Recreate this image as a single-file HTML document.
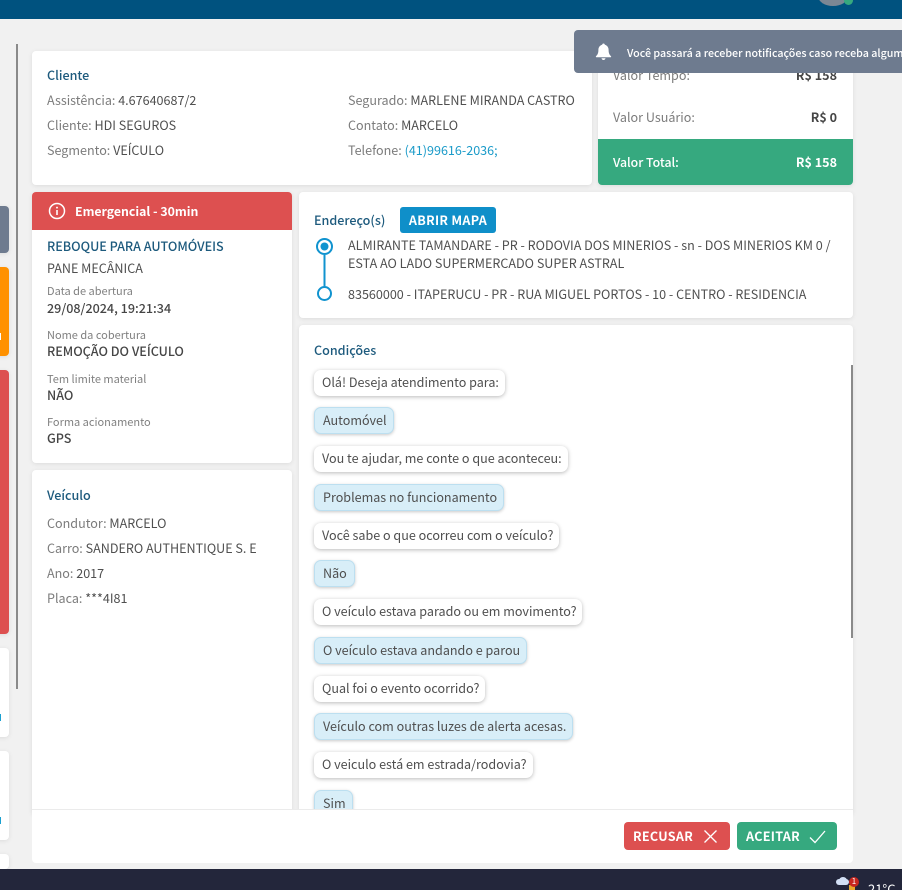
<!DOCTYPE html>
<html lang="pt-BR"><head><meta charset="utf-8"><title>Assistência</title>
<style>
*{box-sizing:border-box}
html,body{margin:0;padding:0;width:902px;height:890px;overflow:hidden;background:#f1f1f1}
body{position:relative;font-family:"Noto Sans CJK JP","Liberation Sans",sans-serif;font-size:12.57px;color:#4f4f4f}
.a{position:absolute}
.t{position:absolute;white-space:nowrap;line-height:20px;height:20px}
.card{position:absolute;background:#fff;border-radius:4px;box-shadow:0 1px 5px rgba(0,0,0,.09)}
.h{color:#1d5a7d;font-weight:500}
.g{color:#7c7c7c}
.d{color:#4f4f4f}
.s{font-size:11px;color:#808080}
.b{font-weight:500;color:#454545}
.bub{position:absolute;left:314px;height:26px;line-height:23px;padding:0 8px;border-radius:7px;background:#fff;box-shadow:0 1px 4px rgba(0,0,0,.28);white-space:nowrap;color:#4f4f4f}
.u{background:#d8eef8;border:1px solid #bcdff0;line-height:23px;height:27px;box-shadow:0 1px 3px rgba(0,0,0,.22)}
</style></head><body>
<div class="a" style="left:0;top:0;width:902px;height:19px;background:#00527f"></div>
<div class="a" style="left:818px;top:-14px;width:30px;height:20px;border-radius:50%;background:#7b8794"></div>
<div class="a" style="left:844px;top:-4px;width:9px;height:9px;border-radius:50%;background:#36a97f"></div>

<div class="a" style="left:16px;top:44px;width:2px;height:645px;background:#8a8a8a"></div>
<div class="card" style="left:-6px;top:206px;width:15px;height:47px;background:#6e7b8f"></div>
<div class="card" style="left:-6px;top:267px;width:15px;height:89px;background:#ff9100"></div>
<div class="card" style="left:-6px;top:370px;width:15px;height:264px;background:#dd5050"></div>
<div class="card" style="left:-6px;top:648px;width:15px;height:89px"></div>
<div class="card" style="left:-6px;top:751px;width:15px;height:89px"></div>
<div class="card" style="left:-6px;top:854px;width:15px;height:15px"></div>
<div class="a" style="left:0;top:714px;width:1px;height:7px;background:#1aa0d0"></div>
<div class="a" style="left:0;top:817px;width:1px;height:7px;background:#1aa0d0"></div>
<div class="a" style="left:0;top:333px;width:1px;height:7px;background:#fff"></div>

<!-- Cliente -->
<div class="card" style="left:32px;top:51px;width:560px;height:134px"></div>
<div class="t h" style="left:47px;top:65px">Cliente</div>
<div class="t g" style="left:47px;top:90px">Assistência: <span class="d">4.67640687/2</span></div>
<div class="t g" style="left:47px;top:115px">Cliente: <span class="d">HDI SEGUROS</span></div>
<div class="t g" style="left:47px;top:140px">Segmento: <span class="d">VEÍCULO</span></div>
<div class="t g" style="left:348px;top:90px">Segurado: <span class="d">MARLENE MIRANDA CASTRO</span></div>
<div class="t g" style="left:348px;top:115px">Contato: <span class="d">MARCELO</span></div>
<div class="t g" style="left:348px;top:140px">Telefone: <span style="color:#1b9bc9">(41)99616-2036;</span></div>

<!-- Valores -->
<div class="card" style="left:598px;top:51px;width:255px;height:134px"></div>
<div class="t g" style="left:613px;top:65px">Valor Tempo:</div>
<div class="t b" style="right:65px;top:65px;font-weight:700">R$ 158</div>
<div class="t g" style="left:613px;top:107px">Valor Usuário:</div>
<div class="t b" style="right:65px;top:107px;font-weight:700">R$ 0</div>
<div class="a" style="left:598px;top:139px;width:255px;height:46px;background:#36a97f;border-radius:0 0 4px 4px"></div>
<div class="t" style="left:613px;top:152px;color:#fff;font-weight:500;font-size:12.300px">Valor Total:</div>
<div class="t" style="right:65px;top:152px;color:#fff;font-weight:700">R$ 158</div>

<!-- Toast -->
<div class="a" style="left:574px;top:30px;width:328px;height:43px;background:#6e7b8f;border-radius:4px 0 0 4px;overflow:hidden">
<svg class="a" style="left:21px;top:13px" width="17" height="18" viewBox="0 0 17 18"><path d="M8.5 0.5c-.8 0-1.300.6-1.300 1.300C4.800 2.400 3.400 4.400 3.400 7c0 3.300-.9 4.800-2.400 6.200-.4.400-.1 1 .4 1h14.200c.5 0 .8-.6.4-1C14.500 11.800 13.600 10.300 13.600 7c0-2.600-1.400-4.600-3.800-5.200 0-.7-.5-1.300-1.300-1.300zM6.500 15.300c.2 1 1 1.700 2 1.700s1.800-.7 2-1.700z" fill="#fff"/></svg>
<div class="a" style="left:53px;top:14px;width:275px;height:20px;overflow:hidden;white-space:nowrap;line-height:20px;color:#fff;font-weight:500;font-size:10.700px">Você passará a receber notificações caso receba algum</div>
</div>

<!-- Emergencial -->
<div class="card" style="left:32px;top:192px;width:260px;height:271px"></div>
<div class="a" style="left:32px;top:192px;width:260px;height:38px;background:#dd5050;border-radius:4px 4px 0 0"></div>
<svg class="a" style="left:48px;top:202px" width="18" height="18" viewBox="0 0 18 18" fill="none" stroke="#fff" stroke-width="1.500"><circle cx="9" cy="9" r="7.500"/><path d="M9 8v5" stroke-width="1.600"/><path d="M9 4.800v1.600" stroke-width="1.800"/></svg>
<div class="t" style="left:75px;top:201px;color:#fff;font-weight:700;font-size:12.300px">Emergencial - 30min</div>
<div class="t h" style="left:47px;top:236px">REBOQUE PARA AUTOMÓVEIS</div>
<div class="t d" style="left:47px;top:258px">PANE MECÂNICA</div>
<div class="t s" style="left:47px;top:281px">Data de abertura</div>
<div class="t b" style="left:47px;top:298px">29/08/2024, 19:21:34</div>
<div class="t s" style="left:47px;top:325px">Nome da cobertura</div>
<div class="t b" style="left:47px;top:341px">REMOÇÃO DO VEÍCULO</div>
<div class="t s" style="left:47px;top:369px">Tem limite material</div>
<div class="t b" style="left:47px;top:385px">NÃO</div>
<div class="t s" style="left:47px;top:412px">Forma acionamento</div>
<div class="t b" style="left:47px;top:428px">GPS</div>

<!-- Veiculo -->
<div class="card" style="left:32px;top:470px;width:260px;height:345px"></div>
<div class="t h" style="left:47px;top:485px">Veículo</div>
<div class="t g" style="left:47px;top:513px">Condutor: <span class="d">MARCELO</span></div>
<div class="t g" style="left:47px;top:538px">Carro: <span class="d">SANDERO AUTHENTIQUE S. E</span></div>
<div class="t g" style="left:47px;top:563px">Ano: <span class="d">2017</span></div>
<div class="t g" style="left:47px;top:588px">Placa: <span class="d">***4I81</span></div>

<!-- Endereco -->
<div class="card" style="left:299px;top:192px;width:554px;height:126px"></div>
<div class="t h" style="left:314px;top:210px">Endereço(s)</div>
<div class="a" style="left:400px;top:207px;width:96px;height:26px;line-height:26px;background:#0f8fc9;color:#fff;font-weight:700;border-radius:3px;text-align:center;letter-spacing:.3px">ABRIR MAPA</div>
<svg class="a" style="left:314px;top:236px" width="22" height="68" viewBox="0 0 22 68" fill="none"><path d="M10.500 19v31" stroke="#1093cf" stroke-width="2"/><circle cx="10.500" cy="10.500" r="7.500" stroke="#1093cf" stroke-width="2"/><circle cx="10.500" cy="10.500" r="4" fill="#1093cf"/><circle cx="10.500" cy="57.500" r="6.500" stroke="#1093cf" stroke-width="2"/></svg>
<div class="t d" style="left:348px;top:235px">ALMIRANTE TAMANDARE - PR - RODOVIA DOS MINERIOS - sn - DOS MINERIOS KM 0 /</div>
<div class="t d" style="left:348px;top:253px">ESTA AO LADO SUPERMERCADO SUPER ASTRAL</div>
<div class="t d" style="left:348px;top:284px">83560000 - ITAPERUCU - PR - RUA MIGUEL PORTOS - 10 - CENTRO - RESIDENCIA</div>

<!-- Condicoes -->
<div class="card" style="left:299px;top:325px;width:554px;height:490px"></div>
<div class="t h" style="left:314px;top:340px">Condições</div>
<div class="bub" style="top:370px;width:191px">Olá! Deseja atendimento para:</div>
<div class="bub u" style="top:407px;width:80px">Automóvel</div>
<div class="bub" style="top:446px;width:254px">Vou te ajudar, me conte o que aconteceu:</div>
<div class="bub u" style="top:484px;width:190px">Problemas no funcionamento</div>
<div class="bub" style="top:523px;width:245px">Você sabe o que ocorreu com o veículo?</div>
<div class="bub u" style="top:560px;width:41px">Não</div>
<div class="bub" style="top:599px;width:268px">O veículo estava parado ou em movimento?</div>
<div class="bub u" style="top:637px;width:213px">O veículo estava andando e parou</div>
<div class="bub" style="top:676px;width:171px">Qual foi o evento ocorrido?</div>
<div class="bub u" style="top:713px;width:259px">Veículo com outras luzes de alerta acesas.</div>
<div class="bub" style="top:752px;width:219px">O veiculo está em estrada/rodovia?</div>
<div class="bub u" style="top:790px;width:39px">Sim</div>
<div class="a" style="left:851px;top:365px;width:2px;height:273px;background:#8a8a8a"></div>

<!-- Footer -->
<div class="a" style="left:32px;top:809px;width:821px;height:54px;background:#fff;border-top:1px solid #ebebeb;border-radius:0 0 4px 4px"></div>
<div class="a" style="left:624px;top:822px;width:106px;height:28px;background:#dd5050;border-radius:4px"></div>
<div class="t" style="left:633px;top:826px;color:#fff;font-weight:700;letter-spacing:.3px">RECUSAR</div>
<svg class="a" style="left:703px;top:829px" width="15" height="15" viewBox="0 0 15 15" stroke="#fff" stroke-width="1.300" fill="none"><path d="M1.500 1.500l12 12M13.500 1.500l-12 12"/></svg>
<div class="a" style="left:737px;top:822px;width:100px;height:28px;background:#36a97f;border-radius:4px"></div>
<div class="t" style="left:746px;top:826px;color:#fff;font-weight:700;letter-spacing:.3px">ACEITAR</div>
<svg class="a" style="left:809px;top:829px" width="17" height="15" viewBox="0 0 17 15" stroke="#fff" stroke-width="1.300" fill="none"><path d="M1 8.500l5 5L16 2"/></svg>

<!-- Taskbar -->
<div class="a" style="left:0;top:869px;width:902px;height:21px;background:#23263b"></div>
<div class="a" style="left:836px;top:879px;width:13px;height:6px;border-radius:4px;background:#d3e0f5"></div>
<div class="a" style="left:839px;top:877px;width:8px;height:7px;border-radius:50%;background:#d3e0f5"></div>
<div class="a" style="left:849px;top:885px;width:6px;height:5px;background:#e8a628"></div>
<div class="a" style="left:849px;top:877px;width:10px;height:10px;border-radius:50%;background:#c6261f;color:#fff;font-size:8px;line-height:10px;text-align:center">1</div>
<div class="a" style="left:868px;top:881px;width:34px;height:9px;overflow:hidden;color:#fff;font-size:13px;line-height:16px;white-space:nowrap">21°C</div>
</body></html>
